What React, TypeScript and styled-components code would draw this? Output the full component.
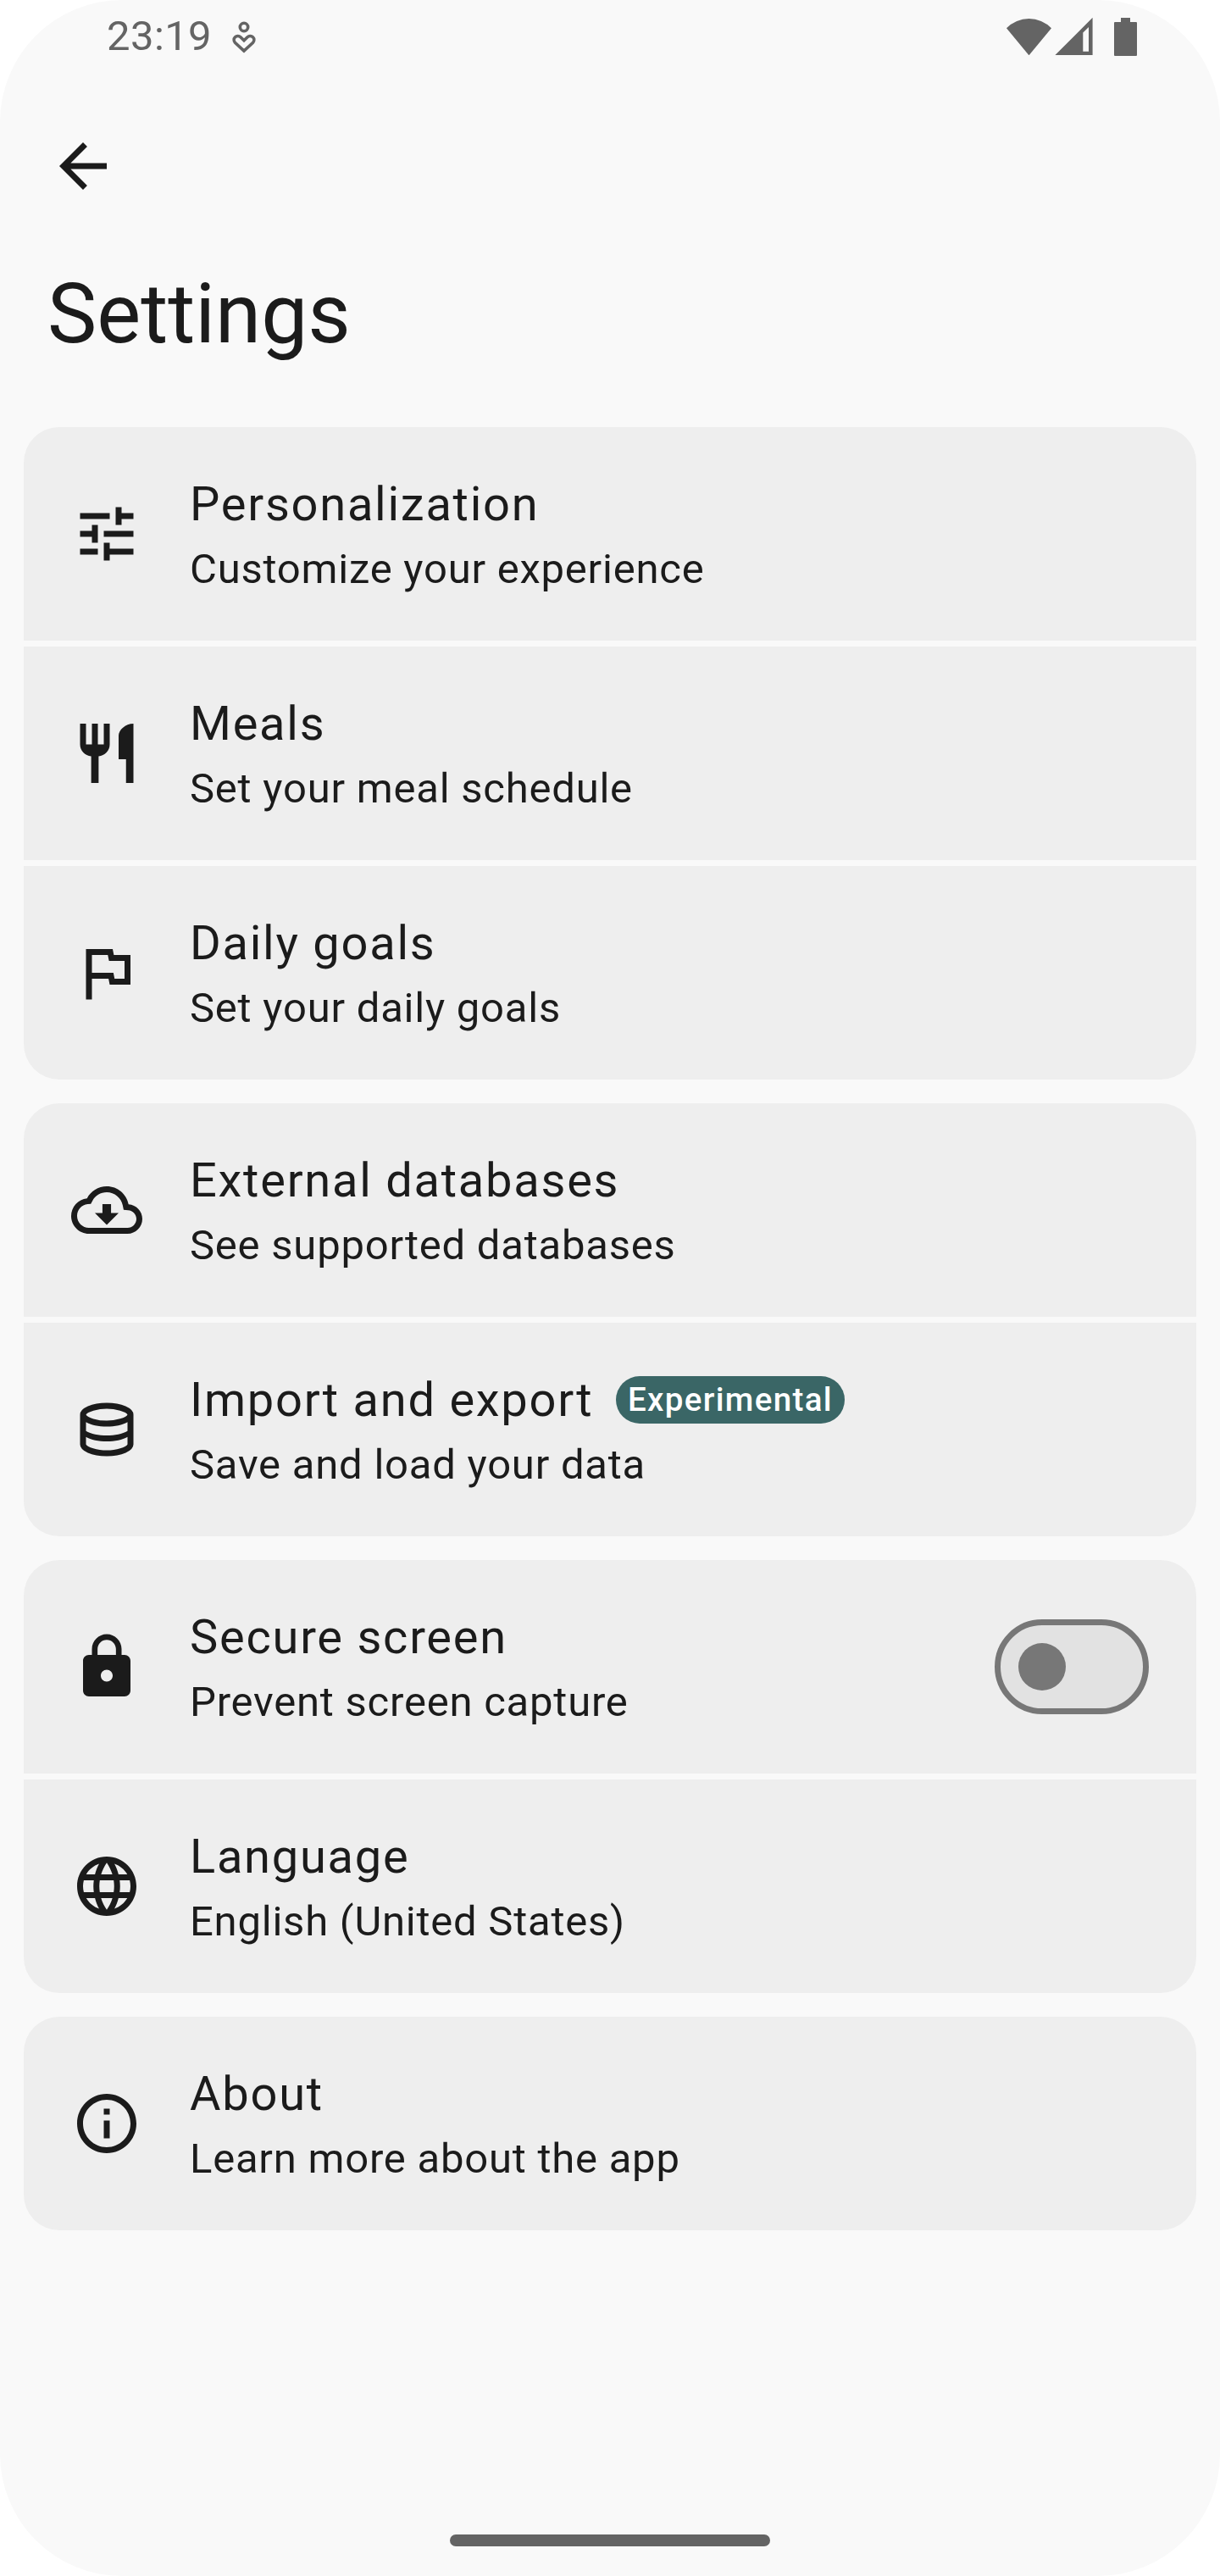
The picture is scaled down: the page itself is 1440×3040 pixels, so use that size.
import React, { useState } from "react";
import styled, { createGlobalStyle } from "styled-components";

const color = {
  surface: "#f9f9f9",
  card: "#eeeeee",
  text: "#1b1b1b",
  status: "#646464",
  outline: "#777777",
  track: "#e2e2e2",
  badge: "#3a6666",
};

const GlobalStyle = createGlobalStyle`
  *, *::before, *::after { box-sizing: border-box; }
  html, body { margin: 0; padding: 0; background: #ffffff; }
  body { font-family: Roboto, "Noto Sans", sans-serif; color: ${color.text}; }
`;

const Screen = styled.div`
  display: flex;
  flex-direction: column;
  width: 1440px;
  height: 3040px;
  background: ${color.surface};
  border-radius: 144px;
  overflow: hidden;
`;

const StatusBar = styled.header`
  display: flex;
  align-items: center;
  justify-content: space-between;
  flex: none;
  height: 86px;
  padding: 0 98px 0 126px;
  color: ${color.status};
`;

const StatusGroup = styled.div<{ $gap: number }>`
  display: flex;
  align-items: center;
  gap: ${(p) => p.$gap}px;
`;

const Clock = styled.time`
  font-size: 49px;
  line-height: 58px;
  letter-spacing: 0.4px;
`;

const Glyph = styled.svg`
  display: block;
  flex: none;
  fill: currentColor;
`;

const AppBar = styled.div`
  display: flex;
  flex-direction: column;
  align-items: flex-start;
  gap: 70px;
  padding: 68px 56px 70px;
`;

const BackButton = styled.button`
  display: flex;
  padding: 0;
  border: 0;
  background: none;
  color: inherit;
`;

const Title = styled.h1`
  margin: 0;
  font-size: 98px;
  line-height: 126px;
  font-weight: 400;
`;

const Groups = styled.main`
  display: flex;
  flex-direction: column;
  flex: 1;
  gap: 28px;
  padding: 0 28px;
`;

const Group = styled.section`
  display: flex;
  flex-direction: column;
  gap: 7px;
  border-radius: 42px;
  overflow: hidden;
`;

const Row = styled.div`
  display: flex;
  align-items: center;
  gap: 56px;
  height: 252px;
  padding: 0 56px;
  background: ${color.card};
`;

const RowText = styled.div`
  flex: 1;
  min-width: 0;
`;

const Headline = styled.div`
  display: flex;
  align-items: center;
  gap: 26.5px;
  font-size: 56px;
  line-height: 84px;
  letter-spacing: 1.75px;
  white-space: nowrap;
`;

const Supporting = styled.div`
  font-size: 49px;
  line-height: 70px;
  letter-spacing: 0.77px;
  white-space: nowrap;
`;

const Badge = styled.span`
  padding: 0 14px;
  border-radius: 28px;
  background: ${color.badge};
  color: #ffffff;
  font-size: 38.5px;
  font-weight: 500;
  line-height: 56px;
  letter-spacing: 1.35px;
`;

const Track = styled.button<{ $on: boolean }>`
  display: flex;
  align-items: center;
  justify-content: ${(p) => (p.$on ? "flex-end" : "flex-start")};
  flex: none;
  width: 182px;
  height: 112px;
  padding: 0 21px;
  border: 7px solid ${(p) => (p.$on ? color.badge : color.outline)};
  border-radius: 56px;
  background: ${(p) => (p.$on ? color.badge : color.track)};
`;

const Thumb = styled.span<{ $on: boolean }>`
  width: 56px;
  height: 56px;
  border-radius: 50%;
  background: ${(p) => (p.$on ? "#ffffff" : color.outline)};
`;

const NavigationBar = styled.footer`
  display: flex;
  justify-content: center;
  flex: none;
  padding-bottom: 35px;
`;

const Handle = styled.div`
  width: 378px;
  height: 14px;
  border-radius: 7px;
  background: ${color.status};
`;

const paths = {
  back: "M20 11H7.83l5.59-5.59L12 4l-8 8 8 8 1.41-1.41L7.83 13H20v-2z",
  tune: "M3 17v2h6v-2H3zM3 5v2h10V5H3zm10 16v-2h8v-2h-8v-2h-2v6h2zM7 9v2H3v2h4v2h2V9H7zm14 4v-2H11v2h10zm-6-4h2V7h4V5h-4V3h-2v6z",
  meals:
    "M11 9H9V2H7v7H5V2H3v7c0 2.12 1.66 3.84 3.75 3.97V22h2.5v-9.03C11.34 12.84 13 11.12 13 9V2h-2v7zm5-3v8h2.5v8H21V2c-2.76 0-5 2.24-5 4z",
  flag: "M12.36 6l.4 2H18v6h-3.36l-.4-2H7V6h5.36M14 4H5v17h2v-7h5.6l.4 2h7V6h-5.6L14 4z",
  cloud:
    "M19.35 10.04C18.67 6.59 15.64 4 12 4 9.11 4 6.6 5.64 5.35 8.04 2.34 8.36 0 10.91 0 14c0 3.31 2.69 6 6 6h13c2.76 0 5-2.24 5-5 0-2.64-2.05-4.78-4.65-4.96zM19 18H6c-2.21 0-4-1.79-4-4 0-2.05 1.53-3.76 3.56-3.97l1.07-.11.5-.95C8.08 7.14 9.94 6 12 6c2.62 0 4.88 1.86 5.39 4.43l.3 1.5 1.53.11c1.56.1 2.78 1.41 2.78 2.96 0 1.65-1.35 3-3 3zm-5.55-8h-2.9v3H8l4 4 4-4h-2.55z",
  database:
    "M480-120q-151 0-255.5-46.5T120-280v-400q0-66 105.5-113T480-840q149 0 254.5 47T840-680v400q0 67-104.5 113.5T480-120Zm0-479q89 0 179-25.5T760-679q-11-29-100.5-55T480-760q-91 0-178.5 25.5T200-679q14 30 101.5 55T480-599Zm0 199q42 0 81-4t74.5-11.5q35.5-7.5 67-18.5t57.5-25v-120q-26 14-57.5 25t-67 18.5Q600-528 561-524t-81 4q-42 0-82-4t-75.5-11.5Q287-543 256-554t-56-25v120q25 14 56 25t66.5 18.5Q358-408 398-404t82 4Zm0 200q46 0 93.5-7t87.5-18.5q40-11.5 67-26t32-29.5v-98q-26 14-57.5 25t-67 18.5Q600-328 561-324t-81 4q-42 0-82-4t-75.5-11.5Q287-343 256-354t-56-25v99q5 15 31.5 29t66.5 25.5q40 11.5 88 18.5t94 7Z",
  lock: "M18 8h-1V6c0-2.76-2.24-5-5-5S7 3.24 7 6v2H6c-1.1 0-2 .9-2 2v10c0 1.1.9 2 2 2h12c1.1 0 2-.9 2-2V10c0-1.1-.9-2-2-2zm-6 9c-1.1 0-2-.9-2-2s.9-2 2-2 2 .9 2 2-.9 2-2 2zm3.1-9H8.9V6c0-1.71 1.39-3.1 3.1-3.1 1.71 0 3.1 1.39 3.1 3.1v2z",
  globe:
    "M11.99 2C6.47 2 2 6.48 2 12s4.47 10 9.99 10C17.52 22 22 17.52 22 12S17.52 2 11.99 2zm6.93 6h-2.95c-.32-1.25-.78-2.45-1.38-3.56 1.84.63 3.37 1.91 4.33 3.56zM12 4.04c.83 1.2 1.48 2.53 1.91 3.96h-3.82c.43-1.43 1.08-2.76 1.91-3.96zM4.26 14C4.1 13.36 4 12.69 4 12s.1-1.36.26-2h3.38c-.08.66-.14 1.32-.14 2 0 .68.06 1.34.14 2H4.26zm.82 2h2.95c.32 1.25.78 2.45 1.38 3.56-1.84-.63-3.37-1.9-4.33-3.56zm2.95-8H5.08c.96-1.66 2.49-2.93 4.33-3.56C8.81 5.55 8.35 6.75 8.03 8zM12 19.96c-.83-1.2-1.48-2.53-1.91-3.96h3.82c-.43 1.43-1.08 2.76-1.91 3.96zM14.34 14H9.66c-.09-.66-.16-1.32-.16-2 0-.68.07-1.35.16-2h4.68c.09.65.16 1.32.16 2 0 .68-.07 1.34-.16 2zm.25 5.56c.6-1.11 1.06-2.31 1.38-3.56h2.95c-.96 1.65-2.49 2.93-4.33 3.56zM16.36 14c.08-.66.14-1.32.14-2 0-.68-.06-1.34-.14-2h3.38c.16.64.26 1.31.26 2s-.1 1.36-.26 2h-3.38z",
  info: "M11 7h2v2h-2zm0 4h2v6h-2zm1-9C6.48 2 2 6.48 2 12s4.48 10 10 10 10-4.48 10-10S17.52 2 12 2zm0 18c-4.41 0-8-3.59-8-8s3.59-8 8-8 8 3.59 8 8-3.59 8-8 8z",
};

type IconName = keyof typeof paths;

function Icon({ name }: { name: IconName }) {
  return (
    <Glyph
      width="84"
      height="84"
      viewBox={name === "database" ? "0 -960 960 960" : "0 0 24 24"}
      aria-hidden="true"
    >
      <path d={paths[name]} />
    </Glyph>
  );
}

function HealthIcon() {
  return (
    <Glyph width="28" height="40" viewBox="0 0 28 40" aria-hidden="true">
      <g fill="none" stroke="currentColor" strokeWidth="3.6">
        <circle cx="14" cy="9" r="4.7" />
        <path d="M14 37.1L3.4 27.2A4.6 4.6 0 0 1 9.9 20.7L14 24.8L18.1 20.7A4.6 4.6 0 0 1 24.6 27.2Z" />
      </g>
    </Glyph>
  );
}

function WifiIcon() {
  return (
    <Glyph width="53" height="44" viewBox="0 0 53 44" aria-hidden="true">
      <path d="M0 12.2A37 37 0 0 1 53 12.2L26.5 44.3Z" />
    </Glyph>
  );
}

function SignalIcon() {
  return (
    <Glyph width="45" height="44" viewBox="0 0 45 44" aria-hidden="true">
      <path fillRule="evenodd" d="M.4 44L44.6 -.2V44ZM33.3 17.6V39.8H40V11Z" />
    </Glyph>
  );
}

function BatteryIcon() {
  return (
    <Glyph width="27" height="45" viewBox="0 0 27 45" aria-hidden="true">
      <path d="M8 0h11v5h7q1 0 1 1v38q0 1-1 1H1q-1 0-1-1V6q0-1 1-1h7z" />
    </Glyph>
  );
}

interface Setting {
  icon: IconName;
  title: string;
  detail: string;
  badge?: string;
  toggle?: boolean;
}

const groups: Setting[][] = [
  [
    { icon: "tune", title: "Personalization", detail: "Customize your experience" },
    { icon: "meals", title: "Meals", detail: "Set your meal schedule" },
    { icon: "flag", title: "Daily goals", detail: "Set your daily goals" },
  ],
  [
    { icon: "cloud", title: "External databases", detail: "See supported databases" },
    { icon: "database", title: "Import and export", detail: "Save and load your data", badge: "Experimental" },
  ],
  [
    { icon: "lock", title: "Secure screen", detail: "Prevent screen capture", toggle: true },
    { icon: "globe", title: "Language", detail: "English (United States)" },
  ],
  [{ icon: "info", title: "About", detail: "Learn more about the app" }],
];

function Switch({ label }: { label: string }) {
  const [on, setOn] = useState(false);
  return (
    <Track type="button" role="switch" aria-checked={on} aria-label={label} $on={on} onClick={() => setOn(!on)}>
      <Thumb $on={on} />
    </Track>
  );
}

function SettingRow({ icon, title, detail, badge, toggle }: Setting) {
  return (
    <Row>
      <Icon name={icon} />
      <RowText>
        <Headline>
          <span>{title}</span>
          {badge && <Badge>{badge}</Badge>}
        </Headline>
        <Supporting>{detail}</Supporting>
      </RowText>
      {toggle && <Switch label={title} />}
    </Row>
  );
}

export default function App() {
  return (
    <>
      <GlobalStyle />
      <Screen>
        <StatusBar>
          <StatusGroup $gap={24}>
            <Clock>23:19</Clock>
            <HealthIcon />
          </StatusGroup>
          <StatusGroup $gap={25}>
            <StatusGroup $gap={4}>
              <WifiIcon />
              <SignalIcon />
            </StatusGroup>
            <BatteryIcon />
          </StatusGroup>
        </StatusBar>
        <AppBar>
          <BackButton type="button" aria-label="Back">
            <Icon name="back" />
          </BackButton>
          <Title>Settings</Title>
        </AppBar>
        <Groups>
          {groups.map((rows, i) => (
            <Group key={i}>
              {rows.map((row) => (
                <SettingRow key={row.title} {...row} />
              ))}
            </Group>
          ))}
        </Groups>
        <NavigationBar>
          <Handle />
        </NavigationBar>
      </Screen>
    </>
  );
}
